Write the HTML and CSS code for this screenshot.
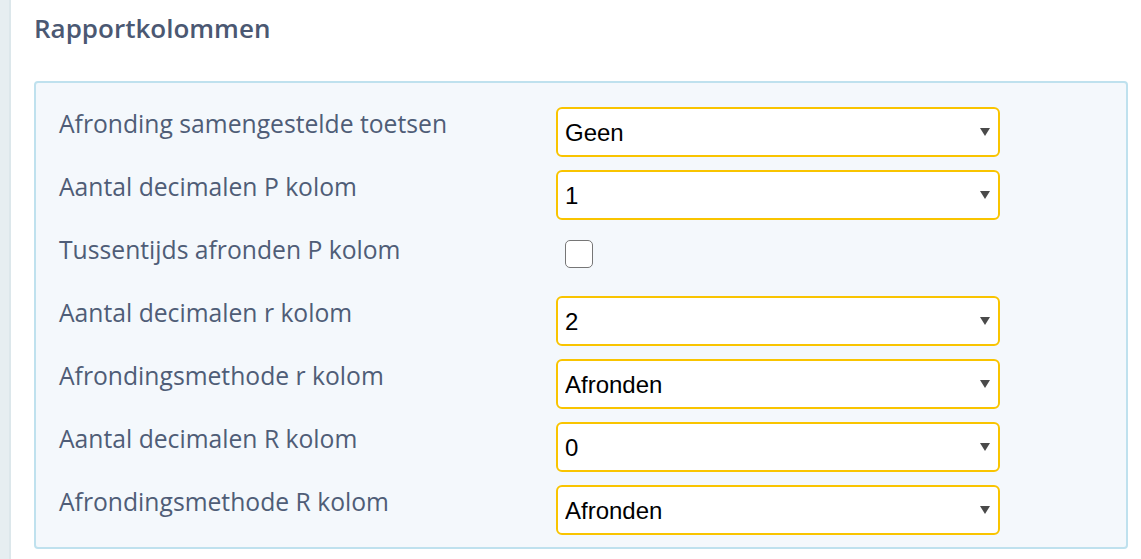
FILE: index.html
```html
<!DOCTYPE html>
<html lang="nl">
<head>
<meta charset="utf-8">
<title>Rapportkolommen</title>
<link rel="stylesheet" href="styles.css">
</head>
<body>
<div class="page">
  <div class="sidebar"></div>
  <main class="content">
    <h2 class="title">Rapportkolommen</h2>
    <section class="panel">
      <div class="row">
        <label class="label">Afronding samengestelde toetsen</label>
        <div class="select"><select><option>Geen</option></select></div>
      </div>
      <div class="row">
        <label class="label">Aantal decimalen P kolom</label>
        <div class="select"><select><option>1</option></select></div>
      </div>
      <div class="row">
        <label class="label">Tussentijds afronden P kolom</label>
        <div class="check-cell"><input type="checkbox" class="check"></div>
      </div>
      <div class="row">
        <label class="label">Aantal decimalen r kolom</label>
        <div class="select"><select><option>2</option></select></div>
      </div>
      <div class="row">
        <label class="label">Afrondingsmethode r kolom</label>
        <div class="select"><select><option>Afronden</option></select></div>
      </div>
      <div class="row">
        <label class="label">Aantal decimalen R kolom</label>
        <div class="select"><select><option>0</option></select></div>
      </div>
      <div class="row">
        <label class="label">Afrondingsmethode R kolom</label>
        <div class="select"><select><option>Afronden</option></select></div>
      </div>
    </section>
  </main>
</div>
</body>
</html>
```
FILE: styles.css
```css
html, body {
  margin: 0;
  padding: 0;
  background: #ffffff;
}
.page {
  display: flex;
  height: 559px;
  overflow: hidden;
}
.sidebar {
  width: 9px;
  flex: none;
  background: #e6eef1;
  border-right: 2px solid #dce7eb;
}
.content {
  flex: 1;
  padding: 0 13px 0 23px;
}
.title {
  margin: 0;
  padding-top: 10px;
  height: 81px;
  box-sizing: border-box;
  font-family: "Open Sans", sans-serif;
  font-weight: 600;
  font-size: 26px;
  line-height: 36px;
  color: #4b5872;
}
.panel {
  border: 2px solid #bfe1ee;
  border-radius: 4px;
  background: #f4f8fc;
  padding: 24px 0 0 23px;
  height: 468px;
  box-sizing: border-box;
}
.row {
  display: grid;
  grid-template-columns: 497px 444px;
  height: 50px;
  margin-bottom: 13px;
}
.label {
  font-family: "Open Sans", sans-serif;
  font-size: 24.7px;
  line-height: 33px;
  color: #4f5d77;
  white-space: nowrap;
}
.select {
  position: relative;
}
.select select {
  appearance: none;
  -webkit-appearance: none;
  width: 444px;
  height: 50px;
  box-sizing: border-box;
  border: 2px solid #f9c400;
  border-radius: 6px;
  background: #ffffff;
  padding: 0 30px 0 7px;
  font-family: "Liberation Sans", Arial, sans-serif;
  font-size: 24px;
  color: #000000;
  outline: none;
}
.select::after {
  content: "";
  position: absolute;
  right: 10px;
  top: 21px;
  width: 0;
  height: 0;
  border-left: 5.5px solid transparent;
  border-right: 5.5px solid transparent;
  border-top: 8px solid #4a4a4a;
  pointer-events: none;
}
.check-cell {
  padding: 7px 0 0 9px;
}
.check {
  appearance: none;
  -webkit-appearance: none;
  margin: 0;
  width: 28px;
  height: 28px;
  box-sizing: border-box;
  border: 1.5px solid #767676;
  border-radius: 5px;
  background: #ffffff;
}
```
